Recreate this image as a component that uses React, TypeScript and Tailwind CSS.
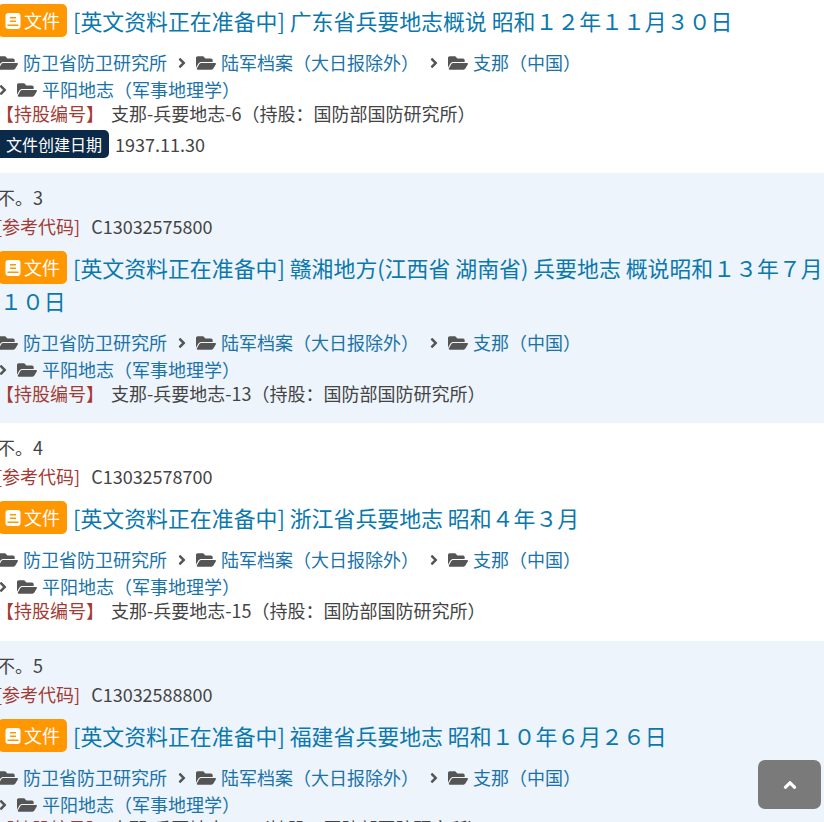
import { FaAngleRight, FaAngleUp, FaFolderOpen } from "react-icons/fa";

const crumbs = ["防卫省防卫研究所", "陆军档案（大日报除外）", "支那（中国）", "平阳地志（军事地理学）"];

const rows = [
  {
    title: "[英文资料正在准备中] 广东省兵要地志概说 昭和１２年１１月３０日",
    holding: "支那-兵要地志-6（持股：国防部国防研究所）",
    date: "1937.11.30",
    pad: "bg-white pt-[4px] pb-[15px]",
  },
  {
    no: "不。3",
    ref: "C13032575800",
    title: "[英文资料正在准备中] 赣湘地方(江西省 湖南省) 兵要地志 概说昭和１３年７月１０日",
    holding: "支那-兵要地志-13（持股：国防部国防研究所）",
    pad: "bg-[#edf4fb] pt-[11px] pb-[16px]",
  },
  {
    no: "不。4",
    ref: "C13032578700",
    title: "[英文资料正在准备中] 浙江省兵要地志 昭和４年３月",
    holding: "支那-兵要地志-15（持股：国防部国防研究所）",
    pad: "bg-white pt-[11px] pb-[17px]",
  },
  {
    no: "不。5",
    ref: "C13032588800",
    title: "[英文资料正在准备中] 福建省兵要地志 昭和１０年６月２６日",
    holding: "支那-兵要地志-16（持股：国防部国防研究所）",
    pad: "bg-[#edf4fb] pt-[11px] pb-[17px]",
  },
];

const BookIcon = () => (
  <svg width="16" height="16" viewBox="0 0 16 16" className="shrink-0">
    <rect x="0.5" y="0" width="15" height="16" rx="3" fill="#fff" />
    <rect x="5" y="4" width="6" height="1.5" fill="#ff9800" />
    <rect x="5" y="7.5" width="6" height="1.5" fill="#ff9800" />
    <rect x="2.5" y="11.5" width="11" height="1.5" fill="#ff9800" />
  </svg>
);

const App = () => {
  return (
    <div className="relative h-[822px] w-[824px] overflow-hidden bg-white text-[18px] leading-[27px] text-[#444] font-['Noto_Sans_CJK_SC','Noto_Sans',sans-serif]">
      {rows.map((row, i) => (
        <div key={i} className={row.pad}>
          {row.no && <p className="-ml-[3px] h-[29px]">{row.no}</p>}
          {row.ref && (
            <p className="h-[29px] -ml-[4px] whitespace-nowrap">
              <span className="mr-[11px] text-[#a33a33]">[参考代码]</span>
              {row.ref}
            </p>
          )}
          <h3 className="mt-[9px] mb-[12px] text-[21.9px] leading-[33px] font-normal text-[#0b78ad] first:mt-0">
            <span className="mr-[6px] -ml-[2px] inline-flex h-[33px] w-[69px] items-center gap-[3px] rounded-[5px] bg-[#ff9800] pl-[7px] align-top text-[18px] text-white">
              <BookIcon />
              文件
            </span>
            {row.title}
          </h3>
          <div className="-ml-[2px] flex flex-wrap text-[#1a73a8]">
            {crumbs.map((c, j) => (
              <span key={c} className="mr-[10px] flex h-[27px] items-center whitespace-nowrap">
                {j > 0 && <FaAngleRight className="mr-[9px] w-[10px] text-[#555]" size={16} />}
                <FaFolderOpen className="mr-[5px] text-[#555]" size={20} />
                {c}
              </span>
            ))}
          </div>
          <p className="-ml-[4px] h-[24px] whitespace-nowrap leading-[20px]">
            <span className="mr-[7px] text-[#a33a33]">【持股编号】</span>
            {row.holding}
          </p>
          {row.date && (
            <p className="mt-[3px] flex items-center gap-[6px]">
              <span className="flex h-[28px] w-[109px] items-center justify-end rounded-r-[5px] bg-[#0b2a4a] pr-[7px] text-[16px] text-white">
                文件创建日期
              </span>
              {row.date}
            </p>
          )}
        </div>
      ))}
      <button className="absolute top-[760px] left-[758px] flex h-[49px] w-[63px] items-center justify-center rounded-[7px] bg-[#7a7a7a] text-white">
        <FaAngleUp size={20} />
      </button>
    </div>
  );
};

export default App;
